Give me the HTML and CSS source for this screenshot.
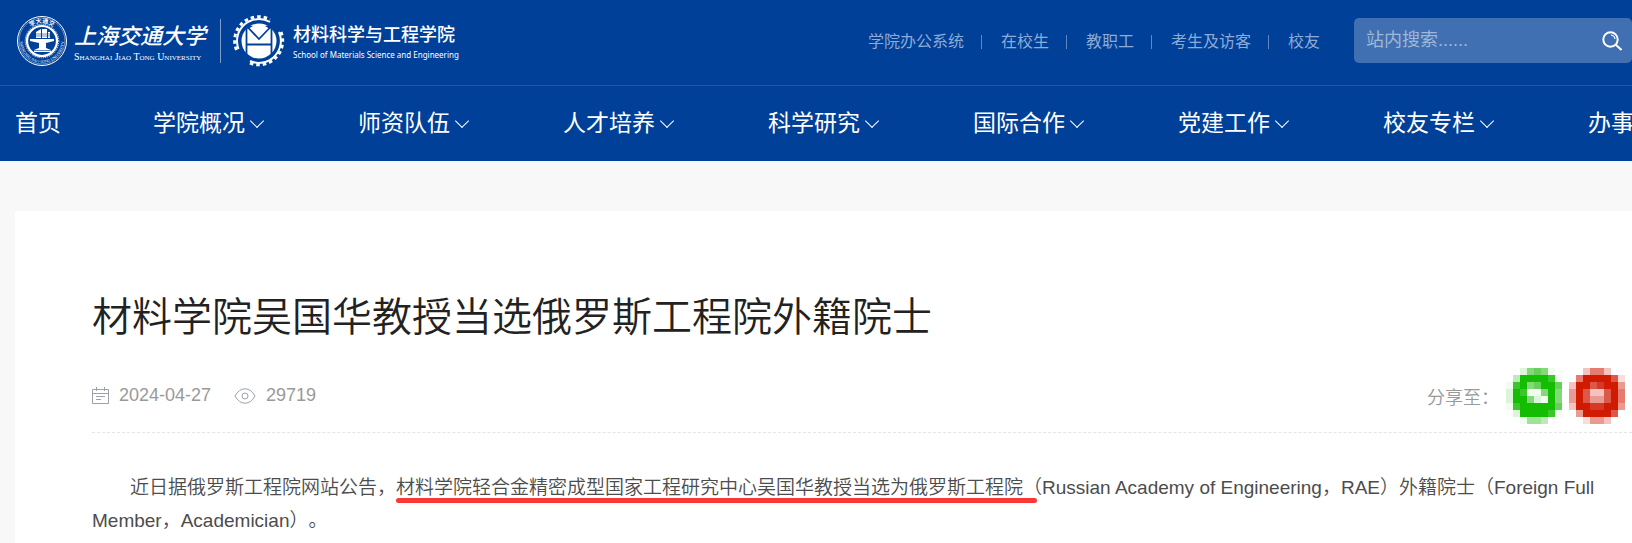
FILE: index.html
```
<!DOCTYPE html>
<html lang="zh-CN">
<head>
    <meta charset="UTF-8">
    <meta name="viewport" content="width=device-width, initial-scale=1.0">
    <title>材料学院吴国华教授当选俄罗斯工程院外籍院士</title>
    <link rel="stylesheet" href="styles.css">
</head>
<body>
    <header class="header">
        <div class="header-top">
            <a class="logo" href="#">
                <!-- University seal -->
                <svg class="seal" viewBox="0 0 52 52" aria-hidden="true">
                    <defs>
                        <path id="seal-top" d="M8 26a18 18 0 0 1 36 0"/>
                        <path id="seal-bottom" d="M4 26a22 22 0 0 0 44 0"/>
                    </defs>
                    <circle cx="26" cy="26" r="24.5" fill="none" stroke="#fff" stroke-width="1"/>
                    <circle cx="26" cy="26" r="23" fill="none" stroke="#fff" stroke-width=".4"/>
                    <circle cx="26" cy="26" r="15" fill="none" stroke="#fff" stroke-width="2.2"/>
                    <circle cx="26" cy="26" r="16.800" fill="none" stroke="#fff" stroke-width="1" stroke-dasharray="1 1"/>
                    <path fill="#fff" d="M20 17l5-3v9h-5zM26 14h5v9h-5zM32 17h2v6h-2zM14 24h24v2l-8 2v5l5 2v2H18v-2l5-2v-5l-9-2z"/>
                    <path stroke="#004098" stroke-width=".6" d="M20 19h14M20 21h14M18 35.500h17"/>
                    <text class="seal-year"><textPath href="#seal-top" startOffset="50%">学大通交</textPath></text>
                    <text class="seal-name"><textPath href="#seal-bottom" startOffset="50%">SHANGHAI JIAO TONG UNIVERSITY</textPath></text>
                </svg>
                <span class="university">
                    <span class="university-cn">上海交通大学</span>
                    <span class="university-en">Shanghai Jiao Tong University</span>
                </span>
                <!-- School gear -->
                <svg class="gear" viewBox="0 0 52 52" aria-hidden="true">
                    <g fill="none" stroke="#fff">
                        <path stroke-width="2" d="M5.500 34A22 22 0 0 1 37 7M46 17A22 22 0 0 1 17 46"/>
                        <path stroke-width="3" stroke-dasharray="3.500 3" d="M3.500 35A24 24 0 0 1 37 4.600M48 17A24 24 0 0 1 16 47.800"/>
                    </g>
                    <circle cx="26" cy="26" r="17.500" fill="#fff"/>
                    <path fill="none" stroke="#004098" stroke-width="1.800" d="M13.500 11v31M38.500 11v31M13.500 11L26 24 38.500 11M13.500 29.500h25"/>
                    <path fill="#004098" d="M13 12l2-2 5 1-5 3zM39 12l-2-2-5 1 5 3z"/>
                </svg>
                <span class="school">
                    <span class="school-cn">材料科学与工程学院</span>
                    <span class="school-en">School of Materials Science and Engineering</span>
                </span>
            </a>
            <nav class="top-links" aria-label="快速链接">
                <a href="#">学院办公系统</a>
                <a href="#">在校生</a>
                <a href="#">教职工</a>
                <a href="#">考生及访客</a>
                <a href="#">校友</a>
            </nav>
            <form class="search">
                <input type="text" placeholder="站内搜索......" aria-label="站内搜索">
                <button type="submit" aria-label="搜索">
                    <svg viewBox="0 0 20 20" width="20" height="20" fill="none" stroke="#fff" stroke-width="2">
                        <circle cx="8.500" cy="8.500" r="7.200"/>
                        <path d="M13.500 13.500l6 5.500"/>
                        <path stroke-width="1.200" d="M9 4q3.500.500 4 4"/>
                    </svg>
                </button>
            </form>
        </div>
        <nav class="main-nav" aria-label="主导航">
            <a href="#">首页</a>
            <a class="has-menu" href="#">学院概况</a>
            <a class="has-menu" href="#">师资队伍</a>
            <a class="has-menu" href="#">人才培养</a>
            <a class="has-menu" href="#">科学研究</a>
            <a class="has-menu" href="#">国际合作</a>
            <a class="has-menu" href="#">党建工作</a>
            <a class="has-menu" href="#">校友专栏</a>
            <a href="#">办事</a>
        </nav>
    </header>

    <main class="article">
        <h1>材料学院吴国华教授当选俄罗斯工程院外籍院士</h1>
        <div class="meta">
            <span class="meta-item">
                <svg viewBox="0 0 17 17" width="17" height="17" fill="none" stroke="#9aa1ab">
                    <path d="M.500 2.500h16v14H.500zM.500 6.500h16M4.500 0v4M12.500 0v4M4 9.500h9M4 12.500h5"/>
                </svg>
                2024-04-27
            </span>
            <span class="meta-item">
                <svg viewBox="0 0 22 16" width="22" height="16" fill="none" stroke="#9aa1ab">
                    <path d="M1 8Q5 .800 11 .800T21 8Q17 15.200 11 15.200T1 8z"/>
                    <circle cx="11" cy="8" r="3"/>
                </svg>
                29719
            </span>
            <div class="share">
                <span>分享至：</span>
                <a href="#" aria-label="微信">
                    <svg viewBox="0 0 8 8" width="56" height="56" shape-rendering="crispEdges">
                        <path fill="#15bd02" d="M2 1h4v1h1v4h-1v1h-4v-1h-1v-4h1z"/>
                        <path fill="#dcf5da" d="M2 0h1v1h-1zM0 3h1v2h-1zM1 6h1v1h-1zM4 4h1v1h-1z"/>
                        <path fill="#83d978" d="M3 0h1v1h-1zM5 0h1v1h-1zM3 2h1v1h-1zM3 4h1v1h-1zM7 3h1v2h-1zM5 3h1v1h-1z"/>
                        <path fill="#67d05d" d="M4 0h1v1h-1zM7 2h1v1h-1zM4 2h1v1h-1zM7 5h1v1h-1z"/>
                        <path fill="#bcebb8" d="M1 1h1v1h-1zM5 7h1v1h-1z"/>
                        <path fill="#a0e29a" d="M3 7h2v1h-2z"/>
                        <path fill="#39c72b" d="M6 1h1v1h-1zM1 2h1v1h-1zM1 5h1v1h-1zM2 3h1v1h-1zM6 6h1v1h-1z"/>
                        <path fill="#f1fbef" d="M6 0h1v1h-1zM0 2h1v1h-1zM0 5h1v1h-1zM3 3h2v1h-2zM5 4h1v1h-1zM7 6h1v1h-1zM7 1h1v1h-1zM2 7h1v1h-1z"/>
                    </svg>
                </a>
                <a href="#" aria-label="微博">
                    <svg viewBox="0 0 8 8" width="56" height="56" shape-rendering="crispEdges">
                        <path fill="#d01b02" d="M2 1h4v1h1v4h-1v1h-4v-1h-1v-4h1z"/>
                        <path fill="#f3c4bf" d="M2 0h1v1h-1zM5 0h1v1h-1zM0 2h1v1h-1zM0 5h1v1h-1zM5 7h1v1h-1zM3 3h2v1h-2z"/>
                        <path fill="#e67b70" d="M3 0h2v1h-2zM1 1h1v1h-1zM7 3h1v2h-1z"/>
                        <path fill="#e99a91" d="M0 3h1v2h-1zM1 6h1v1h-1zM3 7h2v1h-2zM7 2h1v1h-1zM7 5h1v1h-1zM3 4h2v1h-2z"/>
                        <path fill="#dc5949" d="M6 1h1v1h-1zM3 2h1v1h-1zM2 3h1v2h-1zM5 3h1v2h-1zM6 6h1v1h-1z"/>
                        <path fill="#d63a26" d="M4 2h1v1h-1zM3 5h2v1h-2z"/>
                        <path fill="#f8dedb" d="M2 7h1v1h-1zM7 1h1v1h-1z"/>
                    </svg>
                </a>
            </div>
        </div>
        <div class="content">
            <p>近日据俄罗斯工程院网站公告，<span class="marked">材料学院轻合金精密成型国家工程研究中心吴国华教授当选为俄罗斯工程院</span>（Russian Academy of Engineering，RAE）外籍院士（Foreign Full Member，Academician）。</p>
        </div>
    </main>
</body>
</html>
```
FILE: styles.css
```
* {
    box-sizing: border-box;
}
body {
    font-family: "Liberation Sans", "Noto Sans CJK SC", sans-serif;
    margin: 0;
    background-color: #f8f8f8;
    overflow-x: hidden;
}
a {
    color: inherit;
    text-decoration: none;
}
.header {
    background: #004098;
    color: #fff;
}
.header-top {
    display: flex;
    align-items: center;
    height: 86px;
    padding-left: 16px;
    padding-bottom: 4px;
    border-bottom: 1px solid #2659a5;
}
.logo {
    display: flex;
    align-items: center;
}
.seal,
.gear {
    width: 52px;
    height: 52px;
}
.seal-year,
.seal-name {
    fill: #fff;
    text-anchor: middle;
}
.seal-year {
    font-size: 6px;
    font-weight: bold;
}
.seal-name {
    font-family: "Liberation Serif", serif;
    font-size: 4px;
}
.university {
    display: flex;
    flex-direction: column;
    margin-left: 6px;
    margin-right: 12px;
    padding-right: 14px;
    border-right: 1px solid #7f9fcb;
    white-space: nowrap;
}
.university-cn {
    font-size: 22px;
    font-style: italic;
    font-weight: 500;
    line-height: 28px;
}
.university-en {
    font-family: "Liberation Serif", serif;
    font-variant: small-caps;
    font-size: 10px;
    line-height: 12px;
}
.university,
.school {
    padding-top: 4px;
}
.school {
    display: flex;
    flex-direction: column;
    margin-left: 8px;
    white-space: nowrap;
}
.school-cn {
    font-size: 18px;
    font-weight: 500;
    line-height: 24px;
}
.school-en {
    font-family: "Noto Sans", sans-serif;
    font-size: 8px;
    line-height: 16px;
}
.top-links {
    display: flex;
    align-items: center;
    margin-top: 2px;
    margin-left: auto;
    font-size: 16px;
    line-height: 24px;
    color: #8cabd6;
    white-space: nowrap;
}
.top-links a {
    display: flex;
    align-items: center;
}
.top-links a + a::before {
    content: "";
    width: 1px;
    height: 14px;
    margin: 0 19px 0 17px;
    background: #5f88bf;
}
.search {
    display: flex;
    align-items: center;
    width: 278px;
    height: 45px;
    margin-left: 34px;
    padding: 0 10px 0 12px;
    background: #4070b2;
    border-radius: 5px;
}
.search input {
    flex: 1;
    min-width: 0;
    padding: 0;
    border: 0;
    outline: 0;
    background: none;
    color: #fff;
    font: inherit;
    font-size: 18px;
}
.search input::placeholder {
    color: #9fb7d8;
    opacity: 1;
}
.search button {
    display: flex;
    padding: 0;
    border: 0;
    background: none;
}
.main-nav {
    display: flex;
    gap: 92px;
    padding-left: 15px;
    overflow: hidden;
    font-size: 23px;
    line-height: 75px;
    white-space: nowrap;
}
.main-nav a {
    display: flex;
    flex: none;
    align-items: center;
}
.has-menu::after {
    content: "";
    width: 9px;
    height: 9px;
    margin: -5px 4px 0 7px;
    border: solid #fff;
    border-width: 0 1px 1px 0;
    transform: rotate(45deg);
}
.article {
    margin: 50px 0 0 15px;
    padding: 76px 0 20px 77px;
    background: #fff;
}
h1 {
    margin: 0;
    font-size: 40px;
    font-weight: 350;
    line-height: 60px;
    color: #222;
}
.meta {
    display: flex;
    align-items: center;
    gap: 23px;
    height: 86px;
    margin-bottom: 38px;
    padding-top: 12px;
    border-bottom: 1px dashed #e5e5e5;
    font-size: 18px;
    color: #999;
}
.meta-item {
    display: flex;
    align-items: center;
    gap: 10px;
}
.share {
    display: flex;
    align-items: center;
    gap: 7px;
    margin-left: auto;
    padding-right: 7px;
    font-weight: 350;
}
.share a {
    display: flex;
}
.content {
    padding-right: 20px;
    font-size: 19px;
    font-weight: 350;
    line-height: 33px;
    color: #4c4c4c;
    text-spacing-trim: space-all;
}
.content p {
    margin: 0;
    text-indent: 2em;
}
.marked {
    position: relative;
}
/* red marker line under the key phrase */
.marked::after {
    content: "";
    position: absolute;
    left: 0;
    right: -14px;
    bottom: -5px;
    height: 5px;
    border-radius: 3px;
    background: #fb3838;
}
```
